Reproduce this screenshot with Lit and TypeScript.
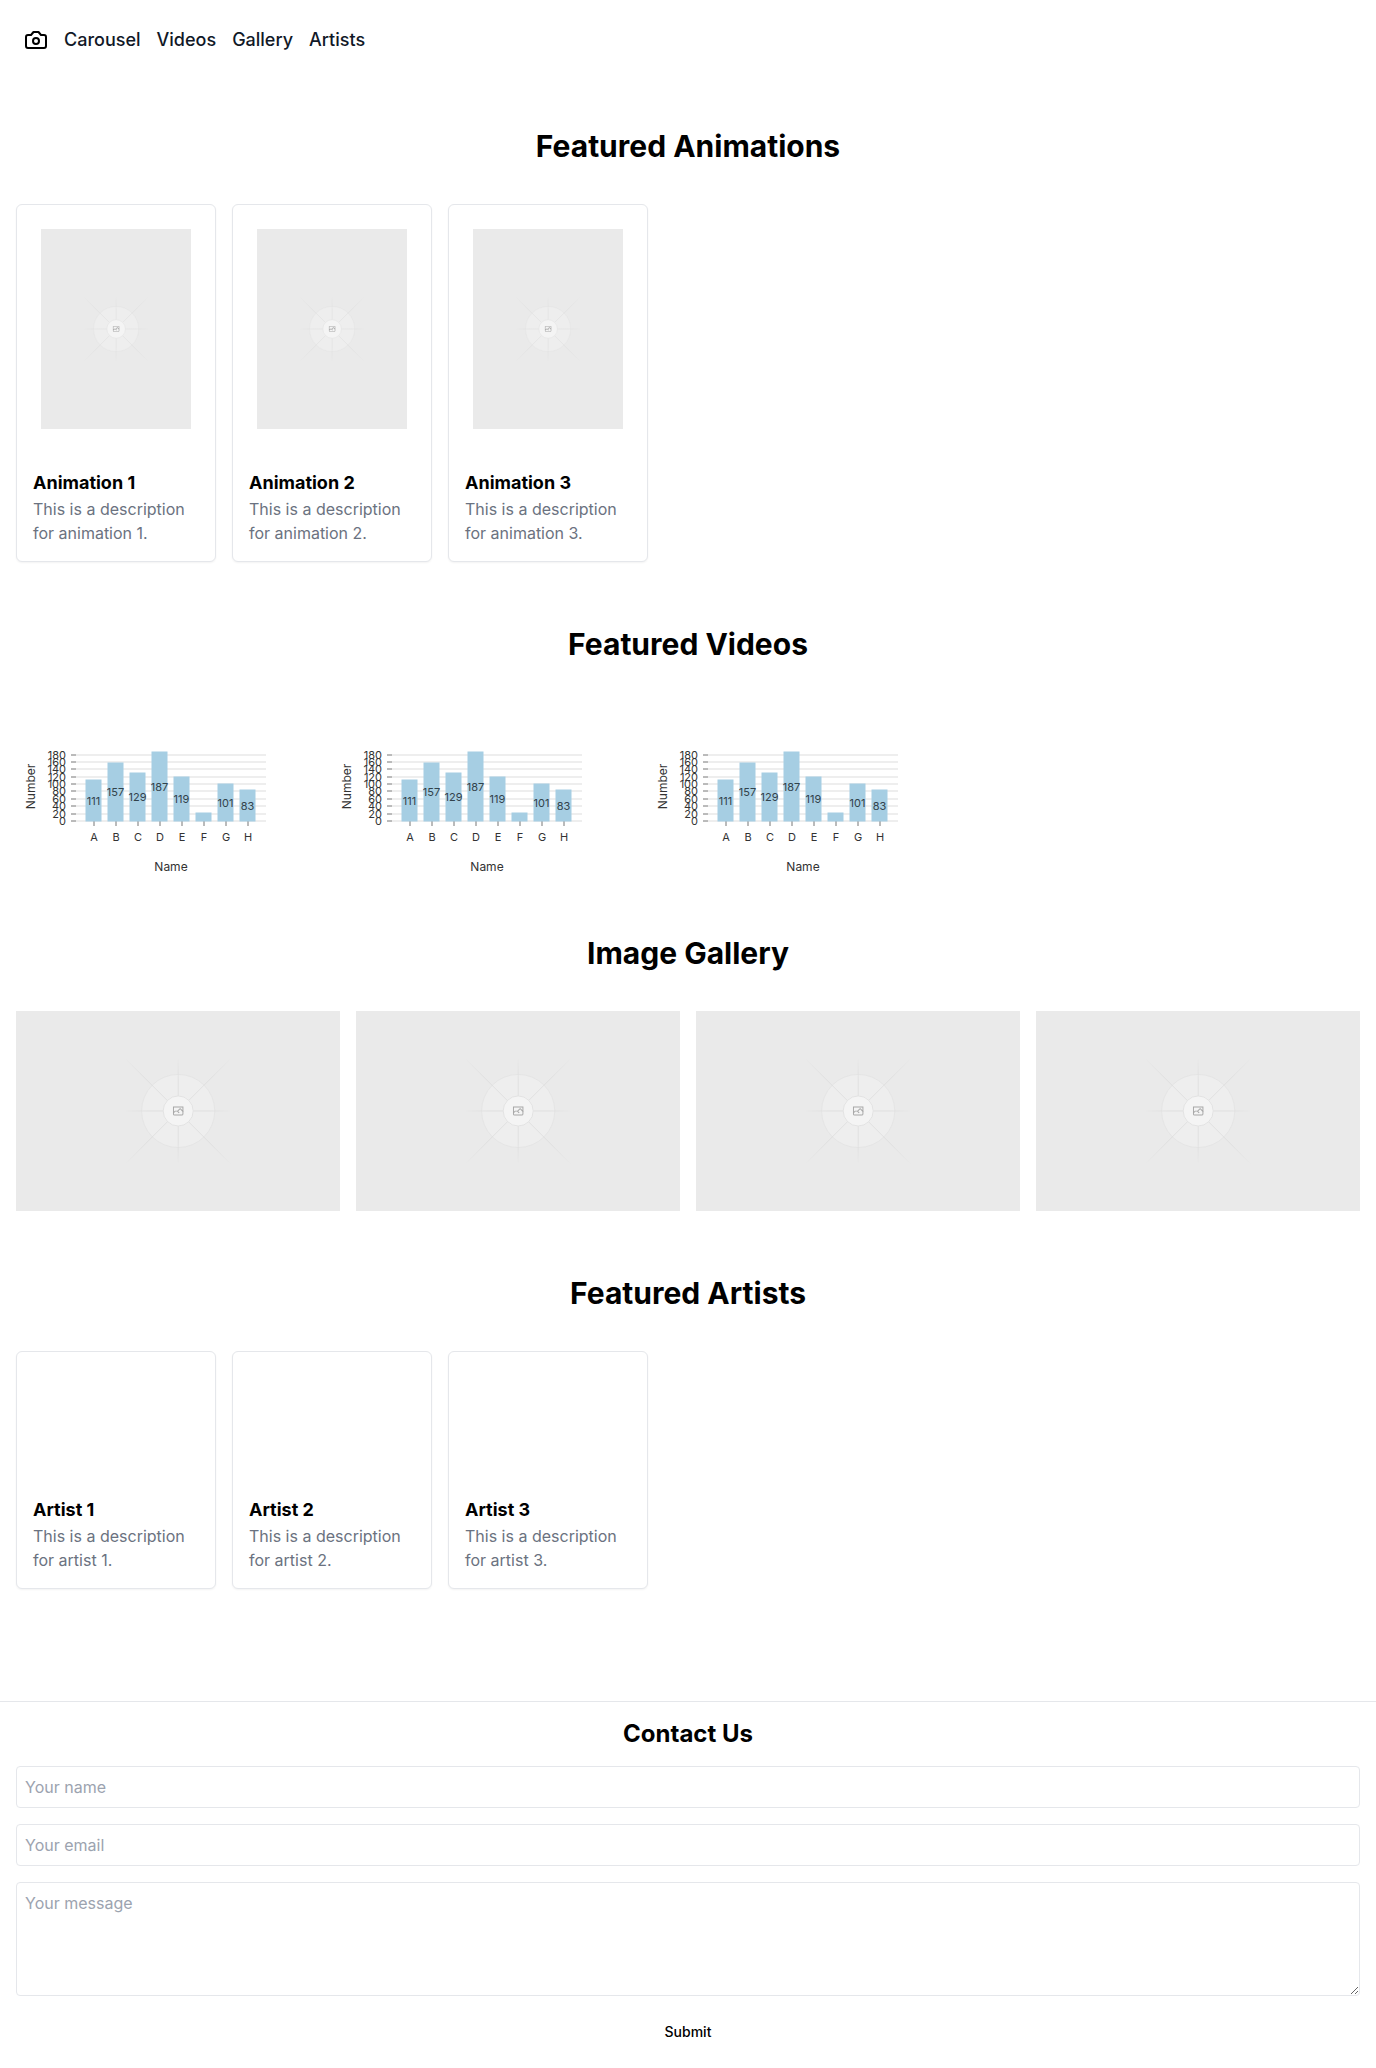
import { LitElement, html, css, svg } from "lit";
import { customElement, property } from "lit/decorators.js";

const NAV_LINKS = ["Carousel", "Videos", "Gallery", "Artists"];

const CHART_DATA = [
  { name: "A", value: 111 },
  { name: "B", value: 157 },
  { name: "C", value: 129 },
  { name: "D", value: 187 },
  { name: "E", value: 119 },
  { name: "F", value: 22 },
  { name: "G", value: 101 },
  { name: "H", value: 83 },
];

/** Grey picture placeholder: a disc crossed by guide lines, with a small image glyph. */
@customElement("picture-placeholder")
export class PicturePlaceholder extends LitElement {
  static styles = css`
    :host {
      display: block;
      height: 200px;
      overflow: hidden;
    }
    .art {
      display: block;
      width: 100%;
      height: 100%;
    }
  `;

  render() {
    const stops = svg`
      <stop stop-color="#C9C9C9" stop-opacity="0"></stop>
      <stop offset=".208" stop-color="#C9C9C9"></stop>
      <stop offset=".792" stop-color="#C9C9C9"></stop>
      <stop offset="1" stop-color="#C9C9C9" stop-opacity="0"></stop>`;
    return html`
      <svg class="art" viewBox="0 0 1200 1200" preserveAspectRatio="xMidYMid slice" fill="none" role="img" aria-label="Placeholder">
        <defs>
          <linearGradient id="rising" x1="404" y1="796" x2="796" y2="404" gradientUnits="userSpaceOnUse">${stops}</linearGradient>
          <linearGradient id="level" x1="404" y1="0" x2="797" y2="0" gradientUnits="userSpaceOnUse">${stops}</linearGradient>
          <linearGradient id="upright" x1="0" y1="796" x2="0" y2="403" gradientUnits="userSpaceOnUse">${stops}</linearGradient>
          <linearGradient id="falling" x1="796" y1="796" x2="404" y2="404" gradientUnits="userSpaceOnUse">${stops}</linearGradient>
        </defs>
        <rect width="1200" height="1200" fill="#EAEAEA"></rect>
        <g opacity=".5">
          <g opacity=".5">
            <circle cx="600.7" cy="599.9" r="136.6" fill="#FAFAFA"></circle>
            <circle cx="600.7" cy="599.9" r="135.4" stroke="#C9C9C9" stroke-width="2.4"></circle>
          </g>
          <path stroke="url(#rising)" stroke-width="2.4" d="M404.3 796.6 795.7 405.2"></path>
          <path stroke="url(#level)" stroke-width="2.4" d="M404.8 599.9h391.8"></path>
          <path stroke="url(#upright)" stroke-width="2.4" d="M600.7 795.7V404"></path>
          <path stroke="url(#falling)" stroke-width="2.4" d="M795.7 796.6 404.3 405.2"></path>
          <circle cx="600.7" cy="599.9" r="56.8" fill="#fff"></circle>
          <path
            fill="#666"
            fill-rule="evenodd"
            clip-rule="evenodd"
            d="M616.426 586.58h-31.434v16.176l3.553-3.554.531-.531h9.068l.074-.074 8.463-8.463h2.565l7.18 7.181V586.58Zm-15.715 14.654 3.698 3.699 1.283 1.282-2.565 2.565-1.282-1.283-5.2-5.199h-6.066l-5.514 5.514-.073.073v2.876a2.418 2.418 0 0 0 2.418 2.418h26.598a2.418 2.418 0 0 0 2.418-2.418v-8.317l-8.463-8.463-7.181 7.181-.071.072Zm-19.347 5.442v4.085a6.045 6.045 0 0 0 6.046 6.045h26.598a6.044 6.044 0 0 0 6.045-6.045v-7.108l1.356-1.355-1.282-1.283-.074-.073v-17.989h-38.689v23.43l-.146.146.146.147Z"
          ></path>
          <circle cx="600.7" cy="599.9" r="55.6" stroke="#C9C9C9" stroke-width="2.4"></circle>
        </g>
      </svg>
    `;
  }
}

/** Bar chart with value labels, a y grid and titled axes. */
@customElement("bar-chart")
export class BarChart extends LitElement {
  @property({ attribute: false }) data = CHART_DATA;

  static styles = css`
    :host {
      display: block;
      width: 300px;
      aspect-ratio: 16 / 9;
    }
    .chart {
      display: block;
      width: 100%;
      height: 100%;
      overflow: visible;
      font-family: Inter, sans-serif;
      font-size: 11px;
    }
    .grid {
      stroke: #dddddd;
    }
    .tick {
      stroke: #777777;
    }
    .bar {
      fill: #a6cee3;
      stroke: #a6cee3;
    }
    .axis-text {
      fill: #333333;
    }
    .legend {
      fill: #333333;
      font-size: 12px;
    }
    .value {
      fill: #32424b;
      text-anchor: middle;
      dominant-baseline: central;
    }
    .end {
      text-anchor: end;
      dominant-baseline: central;
    }
    .below {
      text-anchor: middle;
      dominant-baseline: text-before-edge;
    }
    .middle {
      text-anchor: middle;
      dominant-baseline: central;
    }
  `;

  render() {
    const left = 60;
    const right = 250;
    const top = 50;
    const base = 119;
    const barWidth = 15;
    const step = 22;
    const max = Math.max(...this.data.map((d) => d.value));
    const y = (v: number) => Math.round(base - (v / max) * (base - top));
    const ticks = Array.from({ length: 10 }, (_, i) => i * 20);
    const barX = (i: number) => left + 10 + i * step;
    const tickX = (i: number) => barX(i) + Math.round(barWidth / 2);
    return html`
      <svg class="chart" viewBox="0 0 300 168.75" role="img" aria-label="Number by name">
        ${ticks.map((t) => svg`<line class="grid" x1=${left} x2=${right} y1=${y(t)} y2=${y(t)}></line>`)}
        ${this.data.map(
          (d, i) => svg`
            <line class="tick" x1=${tickX(i)} x2=${tickX(i)} y1=${base} y2=${base + 5}></line>
            <text class="axis-text below" x=${tickX(i)} y=${base + 9}>${d.name}</text>`
        )}
        <text class="legend middle" x=${(left + right) / 2} y=${base + 45}>Name</text>
        ${ticks.map(
          (t) => svg`
            <line class="tick" x1=${left - 5} x2=${left} y1=${y(t)} y2=${y(t)}></line>
            <text class="axis-text end" x=${left - 10} y=${y(t)}>${t}</text>`
        )}
        <text class="legend middle" transform="translate(${left - 46} ${(top + base) / 2}) rotate(-90)">Number</text>
        ${this.data.map(
          (d, i) => svg`
            <rect class="bar" x=${barX(i)} y=${y(d.value)} width=${barWidth} height=${base - y(d.value)}></rect>
            ${d.value > 40 ? svg`<text class="value" x=${barX(i) + barWidth / 2} y=${(y(d.value) + base) / 2}>${d.value}</text>` : null}`
        )}
      </svg>
    `;
  }
}

@customElement("app-root")
export class AppRoot extends LitElement {
  static styles = css`
    :host {
      display: block;
      background: #ffffff;
      color: #000000;
      font-family: Inter, sans-serif;
      font-size: 16px;
      line-height: 24px;
    }
    *,
    *::before,
    *::after {
      box-sizing: border-box;
    }
    h2,
    h3,
    p {
      margin: 0;
    }
    .nav {
      display: flex;
      align-items: center;
      gap: 16px;
      height: 80px;
      padding: 0 24px;
    }
    .logo {
      display: block;
      width: 24px;
      height: 24px;
    }
    .nav-link {
      color: #111827;
      font-size: 18px;
      line-height: 28px;
      font-weight: 500;
      text-decoration: none;
    }
    .main {
      display: flex;
      flex-direction: column;
      gap: 64px;
      padding: 48px 16px 112px;
    }
    .section {
      display: flex;
      flex-direction: column;
      gap: 40px;
    }
    .heading {
      font-size: 30px;
      line-height: 36px;
      font-weight: 700;
      text-align: center;
    }
    .row {
      display: flex;
      flex-wrap: wrap;
      gap: 16px;
    }
    .card {
      width: 200px;
      border: 1px solid #e5e7eb;
      border-radius: 6px;
      background: #ffffff;
      box-shadow: 0 1px 2px rgba(0, 0, 0, 0.05);
    }
    .card-media {
      padding: 24px;
    }
    .card-blank {
      height: 128px;
    }
    .card-body {
      padding: 16px;
    }
    .card-title {
      font-size: 18px;
      line-height: 28px;
      font-weight: 700;
    }
    .card-text {
      color: #6b7280;
    }
    .gallery {
      display: grid;
      grid-template-columns: repeat(4, minmax(0, 1fr));
      gap: 16px;
    }
    .footer {
      border-top: 1px solid #e5e7eb;
      padding: 16px;
    }
    .form {
      display: flex;
      flex-direction: column;
      gap: 16px;
    }
    .form-heading {
      margin-bottom: 16px;
      font-size: 24px;
      line-height: 32px;
      font-weight: 700;
      text-align: center;
    }
    .field {
      display: block;
      width: 100%;
      margin: 0;
      padding: 8px;
      border: 1px solid #e5e7eb;
      border-radius: 4px;
      background: #ffffff;
      color: #000000;
      font: inherit;
    }
    .area {
      resize: vertical;
    }
    .field::placeholder {
      color: #9ca3af;
      opacity: 1;
    }
    .submit {
      height: 40px;
      padding: 8px 16px;
      border: 0;
      border-radius: 6px;
      background: transparent;
      color: #000000;
      font-family: inherit;
      font-size: 14px;
      line-height: 20px;
      font-weight: 500;
    }
  `;

  render() {
    return html`
      <header>
        <nav class="nav">
          <svg class="logo" viewBox="0 0 24 24" fill="none" stroke="currentColor" stroke-width="2" stroke-linecap="round" stroke-linejoin="round" aria-hidden="true">
            <path d="M14.5 4h-5L7 7H4a2 2 0 0 0-2 2v9a2 2 0 0 0 2 2h16a2 2 0 0 0 2-2V9a2 2 0 0 0-2-2h-3l-2.5-3z"></path>
            <circle cx="12" cy="13" r="3"></circle>
          </svg>
          ${NAV_LINKS.map((name) => html`<a class="nav-link" href="#${name.toLowerCase()}">${name}</a>`)}
        </nav>
      </header>
      <main class="main">
        <section class="section" id="carousel">
          <h2 class="heading">Featured Animations</h2>
          <div class="row">
            ${[1, 2, 3].map(
              (n) => html`
                <article class="card">
                  <div class="card-media"><picture-placeholder></picture-placeholder></div>
                  <div class="card-body">
                    <h3 class="card-title">Animation ${n}</h3>
                    <p class="card-text">This is a description for animation ${n}.</p>
                  </div>
                </article>
              `
            )}
          </div>
        </section>
        <section class="section" id="videos">
          <h2 class="heading">Featured Videos</h2>
          <div class="row">${[1, 2, 3].map(() => html`<bar-chart></bar-chart>`)}</div>
        </section>
        <section class="section" id="gallery">
          <h2 class="heading">Image Gallery</h2>
          <div class="gallery">${[1, 2, 3, 4].map(() => html`<picture-placeholder></picture-placeholder>`)}</div>
        </section>
        <section class="section" id="artists">
          <h2 class="heading">Featured Artists</h2>
          <div class="row">
            ${[1, 2, 3].map(
              (n) => html`
                <article class="card">
                  <div class="card-blank"></div>
                  <div class="card-body">
                    <h3 class="card-title">Artist ${n}</h3>
                    <p class="card-text">This is a description for artist ${n}.</p>
                  </div>
                </article>
              `
            )}
          </div>
        </section>
      </main>
      <footer class="footer">
        <h2 class="form-heading">Contact Us</h2>
        <form class="form" @submit=${(e: Event) => e.preventDefault()}>
          <input class="field" type="text" name="name" placeholder="Your name" aria-label="Your name" />
          <input class="field" type="email" name="email" placeholder="Your email" aria-label="Your email" />
          <textarea class="field area" name="message" rows="4" placeholder="Your message" aria-label="Your message"></textarea>
          <button class="submit" type="submit">Submit</button>
        </form>
      </footer>
    `;
  }
}
